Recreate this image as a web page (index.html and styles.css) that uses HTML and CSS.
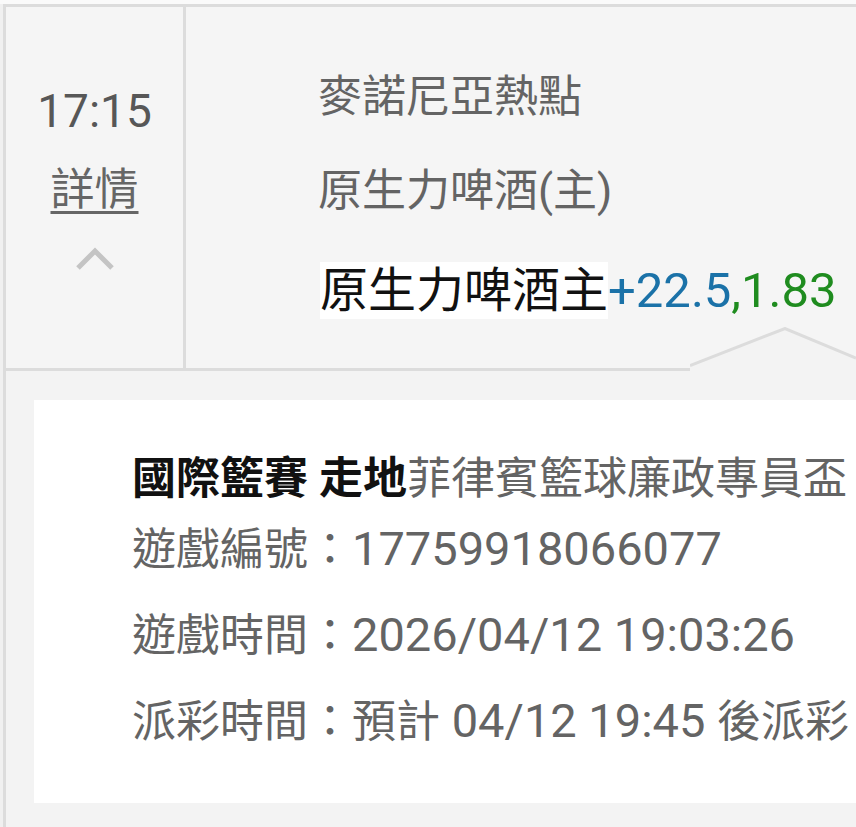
FILE: index.html
```html
<!DOCTYPE html>
<html>
  <head>
    <meta charset="utf-8">
    <meta name="viewport" content="width=device-width, initial-scale=1">
    <title>注單詳情</title>
    <link rel="stylesheet" href="styles.css">
  </head>
  <body>
    <div class="top_strip"></div>
    <div id="board">
      <div class="bet_row">
        <div class="time_col">
          <div class="bet_time">17:15</div>
          <a class="detail_link" href="#">詳情</a>
          <svg class="chevron" width="44" height="26" viewBox="0 0 44 26">
            <polyline points="5,22 22,5 39,22" fill="none" stroke="#c4c4c4" stroke-width="5"/>
          </svg>
        </div>
        <div class="bet_col">
          <div class="league">麥諾尼亞熱點</div>
          <div class="team">原生力啤酒(主)</div>
          <div class="pick"><span class="pick_name">原生力啤酒主</span><span class="handicap">+22.5</span><span class="odds">,1.83</span></div>
        </div>
        <svg class="notch" width="166" height="44" viewBox="0 0 166 44">
          <polygon points="0,40 95,1.5 166,32 166,44 0,44" fill="#f3f3f3"/>
          <polyline points="0,38.5 95,1.5 166,31" fill="none" stroke="#dcdcdc" stroke-width="3"/>
        </svg>
      </div>
      <div class="detail">
        <div class="card">
          <p class="card_title"><b>國際籃賽 走地</b>菲律賓籃球廉政專員盃</p>
          <p class="line_id">遊戲編號：<span class="num">17759918066077</span></p>
          <p class="line_time">遊戲時間：<span class="num">2026/04/12 19:03:26</span></p>
          <p class="line_time">派彩時間：預計<span class="num"> 04/12 19:45 </span>後派彩</p>
        </div>
      </div>
    </div>
  </body>
</html>
```

FILE: styles.css
```css
body {
  margin: 0;
  background: #f0f0f0;
  font-family: Roboto, "Noto Sans CJK TC", sans-serif;
  font-size: 44px;
  color: #646464;
  overflow: hidden;
}

.top_strip {
  height: 4px;
  background: #fafafa;
}

#board {
  margin-left: 3px;
  border-left: 3px solid #dcdcdc;
  background: #f3f3f3;
}

.bet_row {
  display: flex;
  position: relative;
  height: 361px;
  background: #f5f5f5;
  border-top: 3px solid #dcdcdc;
  border-bottom: 3px solid #dcdcdc;
}

.time_col {
  width: 177px;
  border-right: 3px solid #dcdcdc;
  display: flex;
  flex-direction: column;
  align-items: center;
  padding-top: 74px;
}

.bet_time {
  font-size: 46px;
  line-height: 60px;
  color: #575757;
}

.detail_link {
  margin-top: 19px;
  line-height: 60px;
  color: #666;
  text-decoration: underline;
  text-decoration-thickness: 3px;
  text-underline-offset: 6px;
}

.chevron {
  margin-top: 26px;
}

.bet_col {
  flex: 1;
  padding-top: 60px;
  padding-left: 132px;
}

.league,
.team,
.pick {
  line-height: 60px;
  white-space: nowrap;
}

.team {
  margin-top: 34px;
}

.pick {
  margin-top: 40px;
  margin-left: 2px;
}

.pick_name {
  font-size: 48px;
  background: #fff;
  color: #111;
}

.handicap {
  font-size: 49px;
  color: #1b72a8;
}

.odds {
  font-size: 49px;
  color: #1f8c1f;
}

.notch {
  position: absolute;
  right: 0;
  bottom: -3px;
}

.detail {
  padding: 29px 0 24px 28px;
  overflow: hidden;
}

.card {
  height: 354px;
  margin-right: -40px;
  padding: 49px 0 0 98px;
  background: #fff;
}

.card p {
  margin: 0;
  line-height: 60px;
  white-space: nowrap;
}

.card_title b {
  color: #111;
  font-weight: bold;
}

.line_id {
  margin-top: 10px !important;
}

.line_time {
  margin-top: 25px !important;
}

.num {
  font-size: 47px;
}
```
